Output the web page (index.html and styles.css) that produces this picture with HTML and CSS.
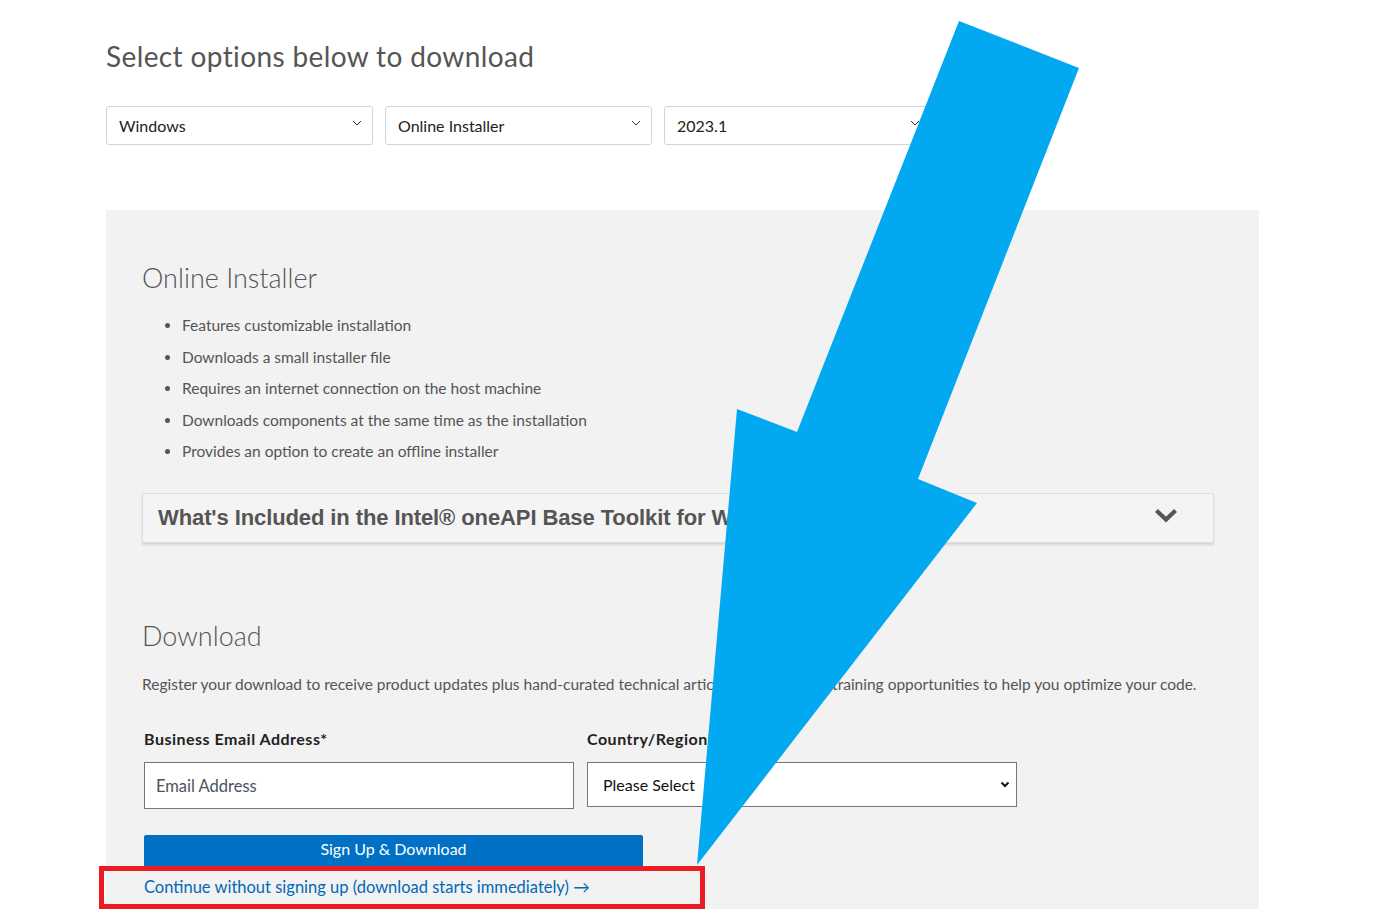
FILE: index.html
```html
<!DOCTYPE html>
<html lang="en">
<head>
<meta charset="utf-8">
<title>Select options below to download</title>
<link rel="stylesheet" href="styles.css">
</head>
<body>
<div class="page">
  <h1 class="title">Select options below to download</h1>
  <div class="selects">
    <div class="sel"><span>Windows</span><svg class="chev" width="10" height="6" viewBox="0 0 10 6"><polyline points="1,1 5,5 9,1" fill="none" stroke="#333" stroke-width="1"/></svg></div>
    <div class="sel"><span>Online Installer</span><svg class="chev" width="10" height="6" viewBox="0 0 10 6"><polyline points="1,1 5,5 9,1" fill="none" stroke="#333" stroke-width="1"/></svg></div>
    <div class="sel"><span>2023.1</span><svg class="chev" width="10" height="6" viewBox="0 0 10 6"><polyline points="1,1 5,5 9,1" fill="none" stroke="#333" stroke-width="1"/></svg></div>
  </div>

  <section class="panel">
    <h2 class="heading">Online Installer</h2>
    <ul class="features">
      <li>Features customizable installation</li>
      <li>Downloads a small installer file</li>
      <li>Requires an internet connection on the host machine</li>
      <li>Downloads components at the same time as the installation</li>
      <li>Provides an option to create an offline installer</li>
    </ul>
    <div class="accordion">
      <span class="acc-title">What's Included in the Intel® oneAPI Base Toolkit for Windows*</span>
      <svg class="acc-chev" width="22" height="14" viewBox="0 0 22 14"><polyline points="3,3 11,10.5 19,3" fill="none" stroke="#555" stroke-width="4.2" stroke-linecap="square"/></svg>
    </div>

    <h2 class="heading download-heading">Download</h2>
    <p class="intro">Register your download to receive product updates plus hand-curated technical articles, tutorials, and training opportunities to help you optimize your code.</p>

    <div class="form">
      <div class="field">
        <label class="lbl">Business Email Address*</label>
        <div class="input"><span class="ph">Email Address</span></div>
      </div>
      <div class="field">
        <label class="lbl">Country/Region*</label>
        <div class="input country"><span>Please Select</span><svg width="10" height="7" viewBox="0 0 10 7"><polyline points="1.5,1.5 5,5 8.5,1.5" fill="none" stroke="#111" stroke-width="2"/></svg></div>
      </div>
    </div>
    <div class="btn">Sign Up &amp; Download</div>
    <a class="continue" href="#">Continue without signing up (download starts immediately) →</a>
  </section>
</div>

<svg class="annot-arrow" width="1376" height="909" viewBox="0 0 1376 909">
  <polygon points="959,21 1079,68 918,479 977,503 697,865 737,409 797,432" fill="#02a9f1"/>
</svg>
<div class="annot-box"></div>
</body>
</html>
```
FILE: styles.css
```css
* { box-sizing: border-box; }
html, body { margin: 0; padding: 0; background: #fff; }
body {
  font-family: Lato, "Open Sans", sans-serif;
  color: #555;
  height: 909px;
  overflow: hidden;
  position: relative;
}
.page { padding: 0 0 0 106px; width: 1259px; }
.title {
  margin: 0;
  padding-top: 38px;
  font-size: 28px;
  font-weight: 400;
  line-height: 36px;
  letter-spacing: 0.38px;
  color: #555;
}
.selects { display: flex; gap: 12px; margin-top: 32px; }
.sel {
  width: 267px; height: 39px;
  border: 1px solid #d3d3d3; border-radius: 3px;
  display: flex; align-items: center; justify-content: space-between;
  padding: 0 10px 0 12px;
  font-size: 16px; color: #222; background: #fff;
}
.sel .chev { margin-top: -6px; }
.panel {
  margin-top: 65px;
  background: #f2f2f2;
  padding: 50px 45px 40px 36px;
  min-height: 720px;
}
.heading {
  margin: 0;
  font-size: 27px; font-weight: 300; line-height: 36px; color: #555;
}
.features { margin: 19px 0 0; padding-left: 40px; }
.features li { font-size: 15.5px; line-height: 20px; margin-bottom: 11.5px; color: #555; }
.accordion {
  margin-top: 32px;
  height: 50px;
  background: #f4f4f4;
  border: 1px solid #dedede;
  box-shadow: 0 2px 2px rgba(0,0,0,0.12);
  display: flex; align-items: center; justify-content: space-between;
  padding: 0 36px 0 15px;
  overflow: hidden;
}
.acc-title {
  font-family: "Liberation Sans", Arial, sans-serif;
  font-weight: 700; font-size: 22px; color: #555; letter-spacing: -0.1px;
  white-space: nowrap;
}
.acc-chev { margin-top: -4px; }
.download-heading { margin-top: 75px; }
.intro { margin: 20px 0 0; font-size: 15.5px; line-height: 20px; color: #555; }
.form { display: flex; gap: 13px; margin-top: 35px; padding-left: 2px; }
.field { width: 430px; display: flex; flex-direction: column; }
.lbl { font-size: 16px; font-weight: 700; color: #222; line-height: 20px; letter-spacing: 0.5px; }
.input {
  margin-top: 13px;
  height: 47px;
  background: #fff; border: 1px solid #777;
  display: flex; align-items: center; padding: 0 11px;
  font-size: 16.5px;
}
.ph { color: #4a5360; }
.country { height: 45px; justify-content: space-between; padding: 0 6px 0 15px; color: #111; font-size: 16px; }
.btn {
  margin: 26px 0 0 2px;
  width: 499px; height: 34px;
  background: #0071c5; color: #fff;
  border-radius: 2px 2px 0 0;
  font-size: 16px; text-align: center; line-height: 28px;
}
.continue {
  display: block; margin: 7px 0 0 2px;
  font-size: 16.5px; color: #0068b5; text-decoration: none; line-height: 22px;
}
.annot-arrow { position: absolute; left: 0; top: 0; pointer-events: none; }
.annot-box {
  position: absolute; left: 99px; top: 866px; width: 606px; height: 43px;
  border: 5px solid #ed1c24;
}
```
